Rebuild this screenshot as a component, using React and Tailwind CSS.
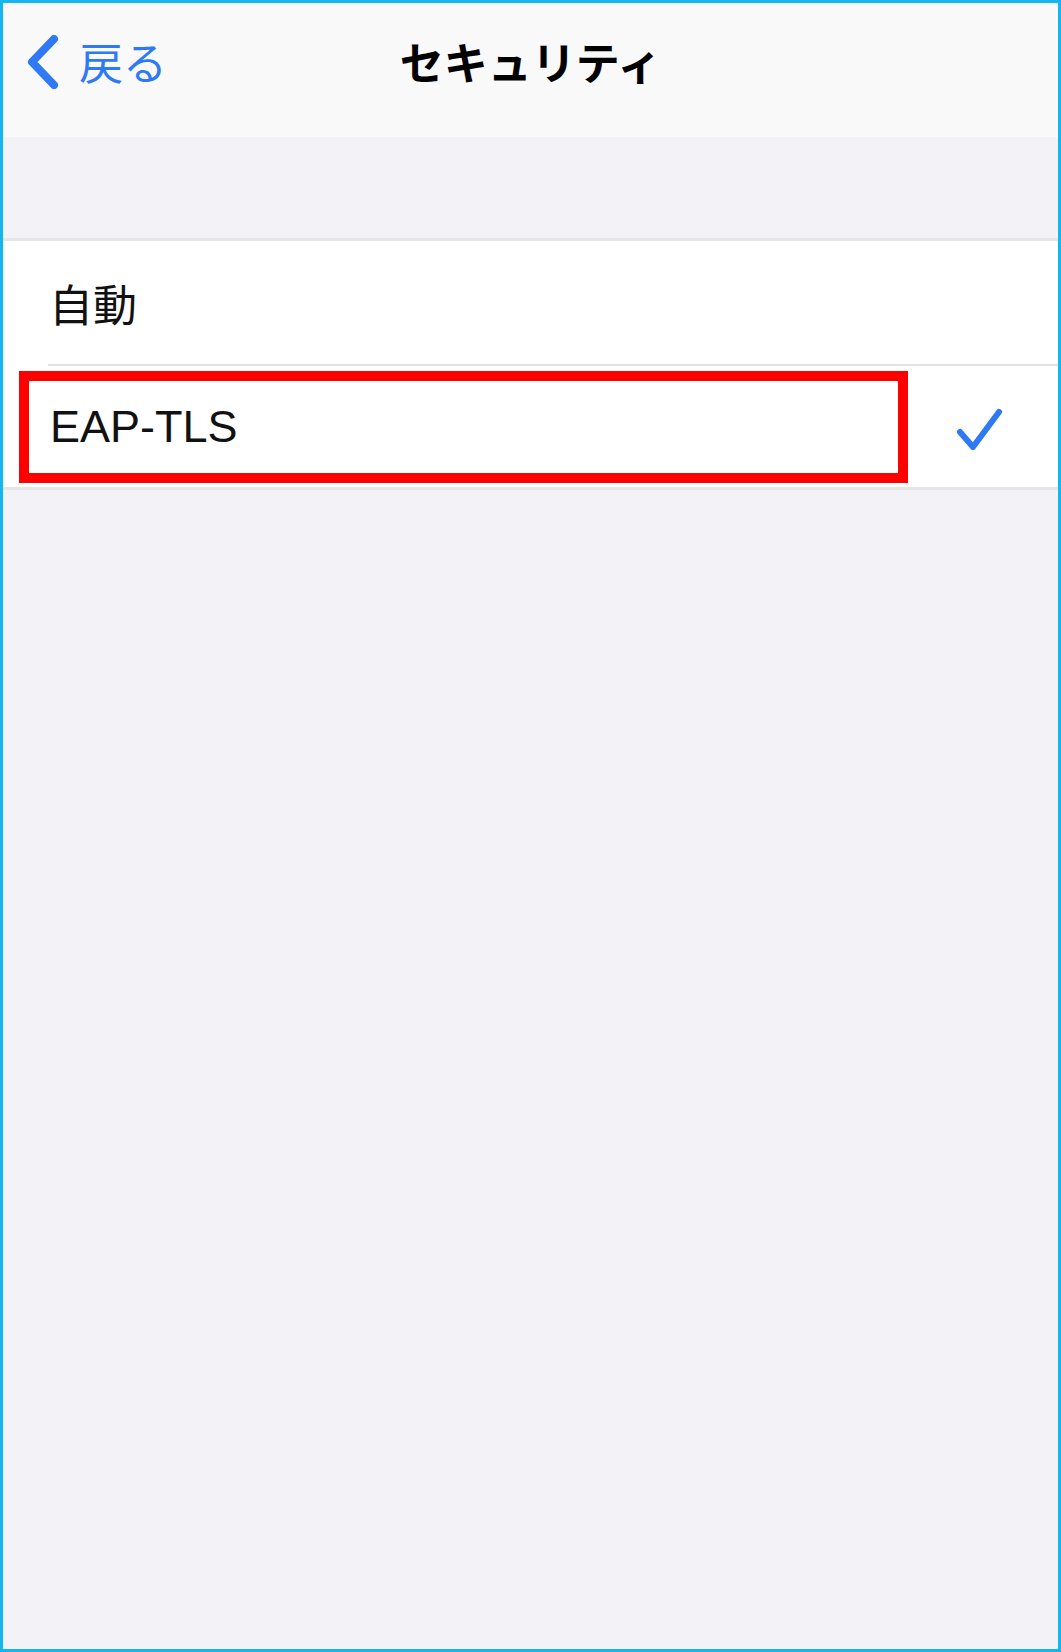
export default function App() {
  const jp = { fontFamily: '"Noto Sans CJK JP", "Noto Sans", sans-serif' };
  return (
    <div className="w-[1061px] h-[1652px] border-[3px] border-[#14b6ef] bg-[#f2f2f7] flex flex-col overflow-hidden">
      <div className="h-[134px] bg-[#f9f9f9] grid grid-cols-[1fr_auto_1fr] items-start pt-[30px]">
        <div className="flex items-center pl-[22px] gap-[20px] text-[#3079f4]">
          <svg width="34" height="54" viewBox="0 0 34 54" className="mt-[1px]">
            <path d="M29 4 L7 27 L29 50" fill="none" stroke="#3079f4" strokeWidth="8" strokeLinecap="round" strokeLinejoin="round" />
          </svg>
          <span className="text-[44px] leading-[56px]" style={jp}>戻る</span>
        </div>
        <div className="text-[44px] leading-[56px] font-bold text-black" style={jp}>セキュリティ</div>
        <div />
      </div>
      <div className="h-[104px] border-b-[3px] border-[#e4e4e9]" />
      <div className="bg-white">
        <div className="h-[123px] flex items-center pl-[46px]">
          <span className="text-[44px] text-[#111] leading-none" style={jp}>自動</span>
        </div>
        <div className="ml-[45px] h-[2px] bg-[#e2e2e6]" />
        <div className="relative h-[121px] flex items-center pl-[47px] pr-[54px] justify-between">
          <span className="text-[45px] text-[#111] leading-none" style={{ fontFamily: '"Liberation Sans", Arial, sans-serif' }}>EAP-TLS</span>
          <svg width="48" height="48" viewBox="0 0 48 48" className="mt-[8px]">
            <path d="M4 25 L17 40 L43 5" fill="none" stroke="#3079f4" strokeWidth="6" strokeLinecap="round" strokeLinejoin="round" />
          </svg>
          <div className="absolute left-[16px] top-[5px] w-[889px] h-[112px] border-[10px] border-[#ff0000]" />
        </div>
      </div>
      <div className="h-[3px] bg-[#e4e4e9]" />
      <div className="flex-1" />
    </div>
  );
}
